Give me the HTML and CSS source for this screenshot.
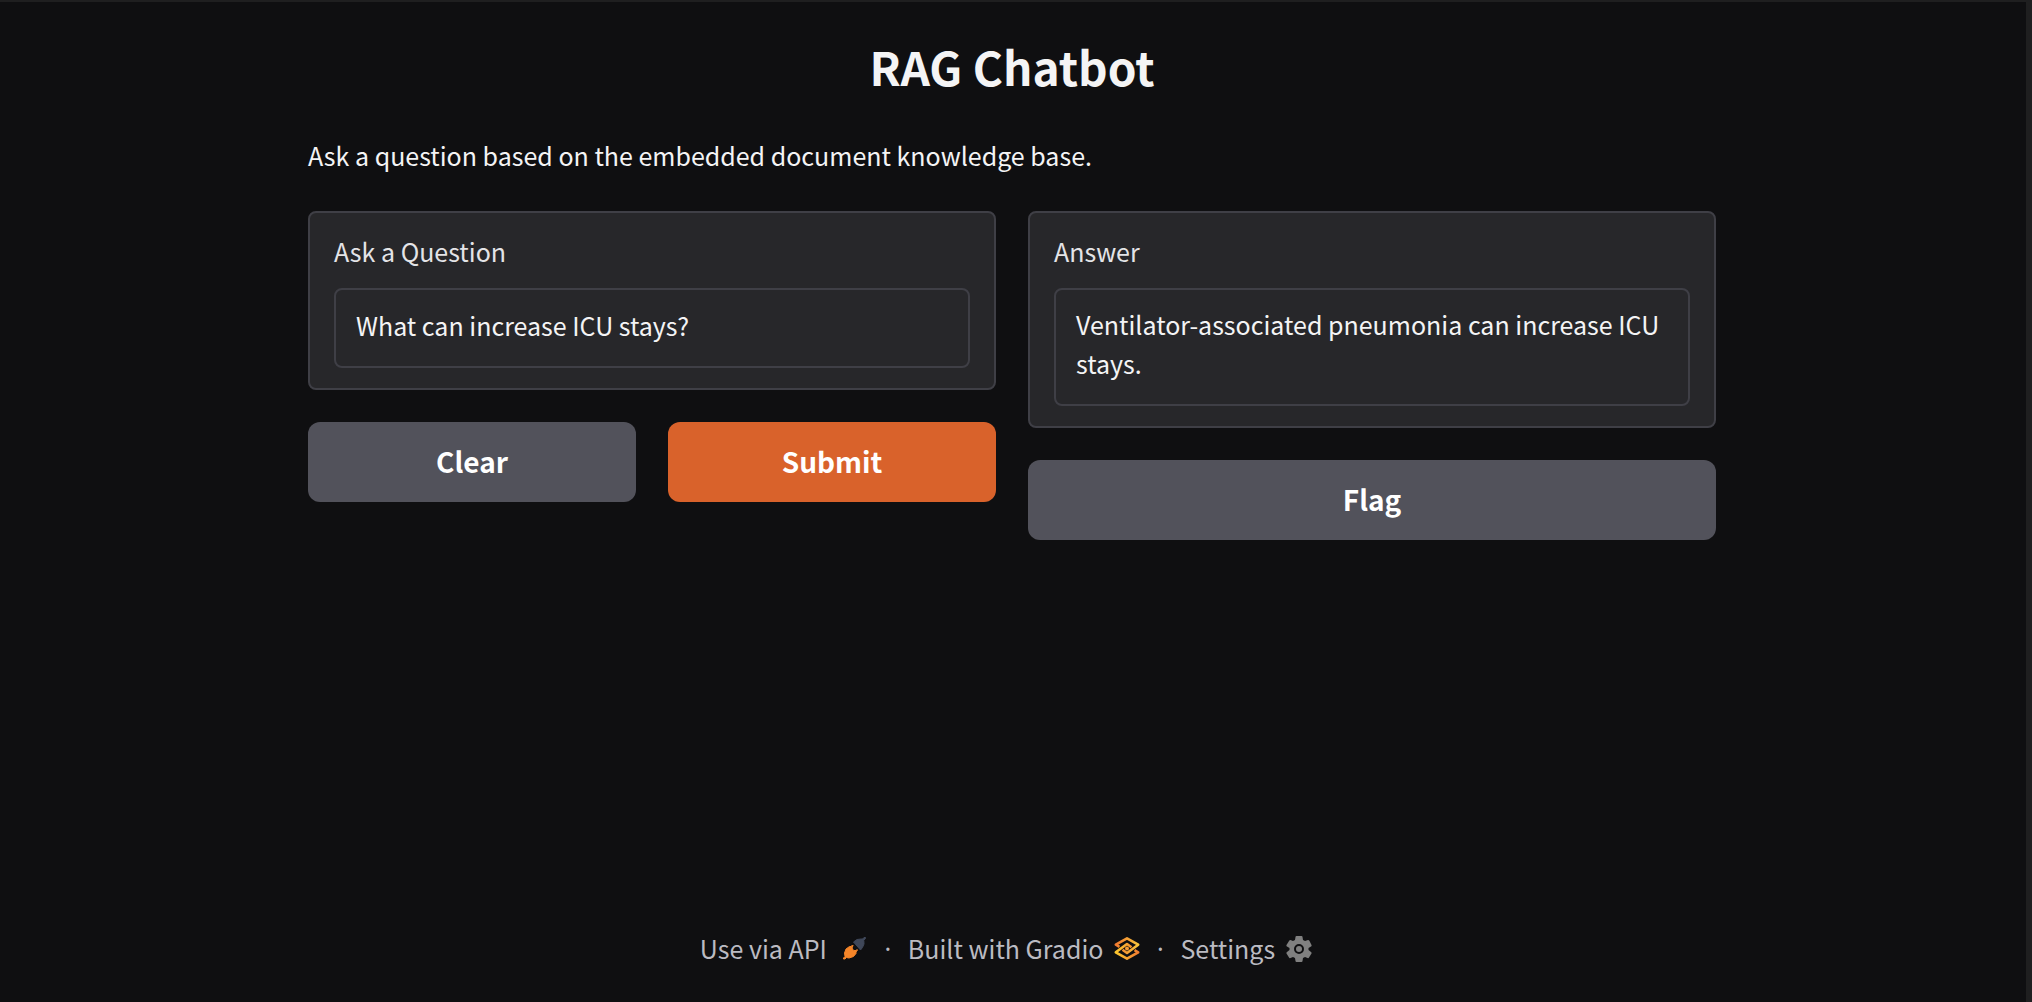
FILE: index.html
```html
<!DOCTYPE html>
<html lang="en">
<head>
<meta charset="utf-8">
<title>RAG Chatbot</title>
<link rel="stylesheet" href="styles.css">
</head>
<body>
<div class="app">
  <main class="content">
    <h1 class="title">RAG Chatbot</h1>
    <p class="description">Ask a question based on the embedded document knowledge base.</p>
    <div class="columns">
      <form class="column">
        <div class="block">
          <label class="label" for="question">Ask a Question</label>
          <input class="field" id="question" type="text" value="What can increase ICU stays?">
        </div>
        <div class="actions">
          <button class="button" type="reset">Clear</button>
          <button class="button primary" type="button">Submit</button>
        </div>
      </form>
      <section class="column">
        <div class="block">
          <label class="label" for="answer">Answer</label>
          <textarea class="field" id="answer" rows="2" readonly>Ventilator-associated pneumonia can increase ICU stays.</textarea>
        </div>
        <div class="actions">
          <button class="button" type="button">Flag</button>
        </div>
      </section>
    </div>
  </main>
  <footer class="footer">
    <a class="footer-link api" href="#api">Use via API
      <svg class="icon" viewBox="0 0 26 26" aria-hidden="true">
        <path fill="#f58529" stroke="#f58529" stroke-linejoin="round" d="M1.500 23 1.500 22 3 20.500 2.500 17 4 13 7.500 10.500 9 10.500 10.500 9 11 9.500 10 12 11.500 14.500 14 14.500 15 13.500 15.500 14 14 16 14 17.500 11.500 20.500 7 22 4.500 21.500 3 23Z"/>
        <path fill="#3f4759" stroke="#3f4759" stroke-linejoin="round" d="M11.500 6 15 3.500 19 3 20.500 3 22 1.500 23.500 1.500 23.500 2.500 21.800 4.300 22 8 20.500 11.500 18.500 14Z"/>
      </svg>
    </a>
    <span class="dot">·</span>
    <a class="footer-link" href="#gradio">Built with Gradio
      <svg class="icon" viewBox="0 0 26 26" aria-hidden="true">
        <defs>
          <linearGradient id="top" x1="0" x2="1"><stop offset="0" stop-color="#f1792f"/><stop offset="1" stop-color="#f8c63b"/></linearGradient>
          <linearGradient id="low" x1="0" x2="1"><stop offset="0" stop-color="#fcc82f"/><stop offset="1" stop-color="#f17d30"/></linearGradient>
        </defs>
        <path fill="none" stroke="url(#low)" stroke-width="2.600" stroke-linejoin="round" d="M20.500 14.200 24.200 16.300 13 22.600 1.800 16.300 13 8 17.500 11.200"/>
        <path fill="none" stroke="url(#top)" stroke-width="2.600" stroke-linejoin="round" d="M5.500 10.800 1.800 8.700 13 2.400 24.200 8.700 13 17 8.500 13.800"/>
        <circle cx="13" cy="12.500" r="2" fill="#f59c35"/>
      </svg>
    </a>
    <span class="dot">·</span>
    <button class="footer-link" type="button">Settings
      <svg class="icon" viewBox="0 0 26 26" aria-hidden="true">
        <g fill="#808080">
          <path fill-rule="evenodd" d="M9.500 1Q9.500 0 10.500 0H15.500Q16.500 0 16.500 1L17 4 19 5 22 4Q23 4 23.500 5L25.500 9Q26 10 25 10.500L22.500 12V14L25 16Q26 16.500 25.500 17.500L23 21.500Q22.500 22.500 21.500 22L19 21 17 22 16.500 25Q16.500 26 15.500 26H10.500Q9.500 26 9.500 25L9 22 7 21 4.500 22Q3.500 22.500 3 21.500L.5 17.500Q0 16.500 1 16L3.500 14V12L1 10.500Q0 10 .5 9L3 5Q3.500 4 4.500 4L7 5 9 4ZM18 13a5 5 0 1 0-10 0 5 5 0 1 0 10 0Z"/>
          <circle cx="13" cy="13" r="3"/>
        </g>
      </svg>
    </button>
  </footer>
</div>
</body>
</html>
```
FILE: styles.css
```css
* {
  box-sizing: border-box;
}

body {
  margin: 0;
  background: #0f0f11;
  color: #f4f4f5;
  font: 400 25px/39px "Noto Sans CJK SC", "Noto Sans", sans-serif;
}

.app {
  display: flex;
  flex-direction: column;
  min-height: 100vh;
  padding: 29px 34px 34px 32px;
  border-top: 2px solid #1f1f20;
  border-right: 6px solid #1f1f20;
}

.content {
  flex: 1;
  width: 100%;
  max-width: 1408px;
  margin: 0 auto;
}

.title {
  margin: 0 0 35px;
  font-size: 46px;
  font-weight: 700;
  line-height: 70px;
  text-align: center;
}

.description {
  margin: 0 0 36px;
}

.columns {
  display: flex;
  align-items: flex-start;
  gap: 32px;
}

.column {
  display: flex;
  flex: 1;
  flex-direction: column;
  gap: 32px;
  min-width: 0;
}

.block {
  display: flex;
  flex-direction: column;
  gap: 17px;
  padding: 19px 24px 20px;
  border: 2px solid #3f3f46;
  border-radius: 8px;
  background: #27272a;
}

.label {
  color: #e4e4e7;
}

.field {
  display: block;
  width: 100%;
  min-height: 80px;
  padding: 15px 20px 21px;
  border: 2px solid #3f3f46;
  border-radius: 8px;
  background: #27272a;
  color: inherit;
  font: inherit;
  resize: none;
  overflow: hidden;
}

.actions {
  display: flex;
  gap: 32px;
}

.button {
  flex: 1;
  height: 80px;
  padding: 0 16px 2px;
  border: 0;
  border-radius: 12px;
  background: #52525b;
  color: #fff;
  font: 700 28px/40px "Noto Sans CJK SC", "Noto Sans", sans-serif;
}

.primary {
  background: #d9622b;
}

.footer {
  display: flex;
  align-items: center;
  justify-content: center;
  padding-right: 12px;
  color: #bbbbc2;
}

.footer-link {
  display: flex;
  align-items: center;
  gap: 11px;
  padding: 0;
  border: 0;
  background: none;
  color: inherit;
  font: inherit;
  text-decoration: none;
}

.api {
  gap: 15px;
}

.icon {
  width: 26px;
  height: 26px;
}

.dot {
  width: 40px;
  font-family: "Noto Sans", sans-serif;
  text-align: center;
}
```
